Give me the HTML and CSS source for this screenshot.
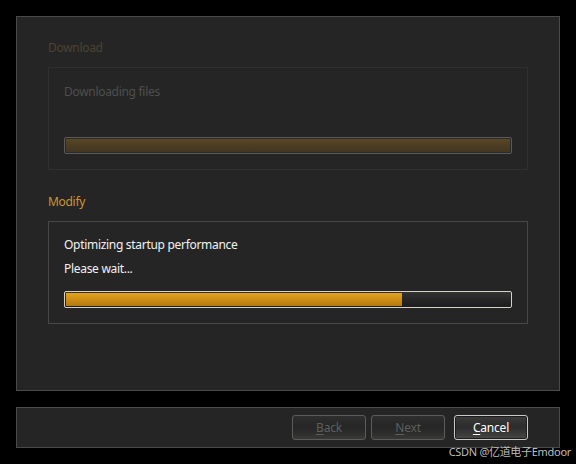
FILE: index.html
```html
<!DOCTYPE html>
<html>
<head>
<meta charset="utf-8">
<link rel="stylesheet" href="styles.css">
</head>
<body>
<div class="window">
  <div class="panel">
    <div class="section-label dim">Download</div>
    <div class="box box-dim">
      <div class="line dim-text">Downloading files</div>
      <div class="bar bar-dim"><div class="fill fill-dim" style="width:100%"></div></div>
    </div>
    <div class="section-label active">Modify</div>
    <div class="box box-active">
      <div class="line">Optimizing startup performance</div>
      <div class="line second">Please wait...</div>
      <div class="bar bar-active"><div class="fill fill-active" style="width:75.6%"></div></div>
    </div>
  </div>
  <div class="footer">
    <button class="btn disabled"><u>B</u>ack</button>
    <button class="btn disabled next"><u>N</u>ext</button>
    <button class="btn primary"><u>C</u>ancel</button>
  </div>
</div>
<div class="watermark">CSDN @亿道电子Emdoor</div>
</body>
</html>
```
FILE: styles.css
```css
html, body {
  margin: 0;
  padding: 0;
  background: #000;
  width: 576px;
  height: 464px;
  overflow: hidden;
  font-family: "Noto Sans", "Noto Sans CJK SC", sans-serif;
  font-size: 12px;
  letter-spacing: -0.3px;
}
.window {
  padding: 16px 16px 0 16px;
  display: flex;
  flex-direction: column;
  gap: 16px;
}
.panel {
  box-sizing: border-box;
  width: 544px;
  height: 375px;
  background: #252525;
  border: 1px solid #4a4a4a;
  padding: 23px 31px 0 31px;
  display: flex;
  flex-direction: column;
}
.section-label {
  line-height: 16px;
  height: 16px;
}
.dim { color: #4d4232; }
.active { color: #cf962e; margin-top: 24px; }
.box {
  box-sizing: border-box;
  height: 103px;
  padding: 16px 15px 15px 15px;
  display: flex;
  flex-direction: column;
}
.box-dim {
  margin-top: 11px;
  border: 1px solid #303030;
}
.box-active {
  margin-top: 11px;
  border: 1px solid #484848;
  padding-top: 15px;
}
.active.section-label { margin-top: 24px; }
.line {
  line-height: 16px;
  height: 16px;
  color: #f2f2f2;
}
.line.second { margin-top: 8px; }
.dim-text { color: #4f4f4f; }
.bar {
  box-sizing: border-box;
  height: 17px;
  border-radius: 2px;
  margin-top: auto;
  padding: 1px;
  display: flex;
}
.bar-dim {
  border: 1px solid #5a5a5a;
  background: #2a2a2a;
}
.bar-active {
  border: 1px solid #d6d2c8;
  background: linear-gradient(#333333, #262626 50%, #1d1d1d);
}
.fill { height: 100%; }
.fill-dim {
  background: linear-gradient(#5a4826, #4c3d22 50%, #433720);
}
.fill-active {
  background: linear-gradient(#e3a21e, #cd8e15 50%, #b37a10);
}
.footer {
  box-sizing: border-box;
  width: 544px;
  height: 41px;
  background: #252525;
  border: 1px solid #4a4a4a;
  display: flex;
  justify-content: flex-end;
  align-items: flex-start;
  padding: 7px 31px 0 0;
}
.btn {
  box-sizing: border-box;
  width: 74px;
  height: 25px;
  border-radius: 3px;
  font-family: "Noto Sans", sans-serif;
  font-size: 12px;
  letter-spacing: -0.2px;
  padding: 0;
  line-height: 21px;
  background: linear-gradient(#2e2e2e, #262626 45%, #2b2b2a 70%, #3a3937);
}
.btn.disabled {
  color: #5f5f5f;
  border: 1px solid #5c5c5c;
}
.btn.next { margin-left: 5px; }
.btn.primary {
  margin-left: 9px;
  color: #ffffff;
  border: 1px solid #c9c9c9;
  box-shadow: inset 0 0 0 1px #1c1c1c;
  background: linear-gradient(#3c3c3c, #2c2c2c 45%, #363634 70%, #4a4947);
}
.btn u { text-underline-offset: 2px; }
.watermark {
  position: absolute;
  right: 5px;
  top: 444px;
  color: #bdbdbd;
  font-family: "Noto Sans", "Noto Sans CJK SC", sans-serif;
  font-size: 11px;
  line-height: 16px;
  letter-spacing: -0.3px;
}
```
